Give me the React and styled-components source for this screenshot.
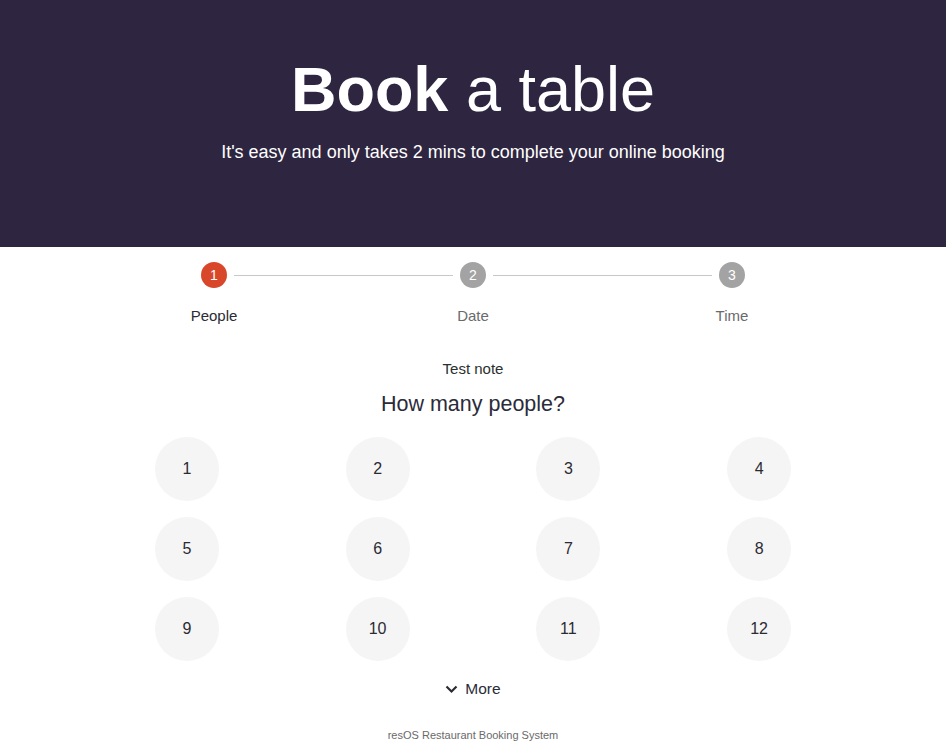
import React, { useState } from "react";
import styled, { createGlobalStyle } from "styled-components";

const GlobalStyle = createGlobalStyle`
  body {
    margin: 0;
    font-family: "Liberation Sans", Arial, sans-serif;
    background: #fff;
    color: #2b2b33;
  }
`;

const Hero = styled.header`
  background: #2e2540;
  color: #fff;
  height: 247px;
  box-sizing: border-box;
  padding-top: 52px;
  text-align: center;
`;

const Title = styled.h1`
  margin: 0;
  font-size: 63px;
  line-height: 74px;
  font-weight: 400;

  strong {
    font-weight: 700;
  }
`;

const Lead = styled.p`
  margin: 15px 0 0;
  font-size: 18px;
  line-height: 22px;
`;

const Stepper = styled.ol`
  list-style: none;
  margin: 0 auto;
  padding: 15px 0 0;
  width: 777px;
  display: grid;
  grid-template-columns: repeat(3, 1fr);
`;

const Step = styled.li`
  position: relative;
  display: flex;
  flex-direction: column;
  align-items: center;

  &:not(:last-child)::after {
    content: "";
    position: absolute;
    top: 13px;
    left: calc(50% + 20px);
    width: calc(100% - 40px);
    height: 1px;
    background: #c8c8c8;
  }
`;

const Dot = styled.span`
  width: 26px;
  height: 26px;
  border-radius: 50%;
  background: ${(p) => (p.$active ? "#d9472b" : "#a3a3a3")};
  color: #fff;
  font-size: 14px;
  display: flex;
  align-items: center;
  justify-content: center;
`;

const StepLabel = styled.span`
  margin-top: 19px;
  font-size: 15px;
  color: ${(p) => (p.$active ? "#2b2b33" : "#6a6a6a")};
`;

const Note = styled.p`
  margin: 36px 0 0;
  text-align: center;
  font-size: 15px;
  color: #2b3030;
`;

const Question = styled.h2`
  margin: 15px 0 0;
  text-align: center;
  font-size: 21.5px;
  line-height: 24px;
  font-weight: 400;
  color: #2b2b3a;
`;

const Grid = styled.div`
  width: 763px;
  margin: 21px auto 0;
  display: grid;
  grid-template-columns: repeat(4, 1fr);
  row-gap: 16px;
  justify-items: center;
`;

const Option = styled.button`
  width: 64px;
  height: 64px;
  border: none;
  border-radius: 50%;
  background: ${(p) => (p.$selected ? "#e6e6e6" : "#f5f5f5")};
  color: #2b2b33;
  font-family: inherit;
  font-size: 16px;
  cursor: pointer;
  padding: 0;
`;

const MoreButton = styled.button`
  display: flex;
  align-items: center;
  gap: 7px;
  margin: 19px auto 0;
  border: none;
  background: none;
  font-family: inherit;
  font-size: 15.5px;
  color: #2b2b3a;
  cursor: pointer;
  padding: 0;
`;

const Footer = styled.footer`
  margin-top: 31px;
  text-align: center;
  font-size: 11px;
  color: #6a6a6a;
`;

const steps = ["People", "Date", "Time"];

export default function App() {
  const [people, setPeople] = useState(null);

  return (
    <>
      <GlobalStyle />
      <Hero>
        <Title>
          <strong>Book</strong> a table
        </Title>
        <Lead>It's easy and only takes 2 mins to complete your online booking</Lead>
      </Hero>
      <Stepper>
        {steps.map((s, i) => (
          <Step key={s}>
            <Dot $active={i === 0}>{i + 1}</Dot>
            <StepLabel $active={i === 0}>{s}</StepLabel>
          </Step>
        ))}
      </Stepper>
      <Note>Test note</Note>
      <Question>How many people?</Question>
      <Grid>
        {Array.from({ length: 12 }, (_, i) => i + 1).map((n) => (
          <Option key={n} $selected={people === n} onClick={() => setPeople(n)}>
            {n}
          </Option>
        ))}
      </Grid>
      <MoreButton>
        <svg width="13" height="9" viewBox="0 0 13 9" fill="none">
          <path d="M1.5 1.5 L6.5 6.5 L11.5 1.5" stroke="#2b2b33" strokeWidth="2.2" />
        </svg>
        More
      </MoreButton>
      <Footer>resOS Restaurant Booking System</Footer>
    </>
  );
}
